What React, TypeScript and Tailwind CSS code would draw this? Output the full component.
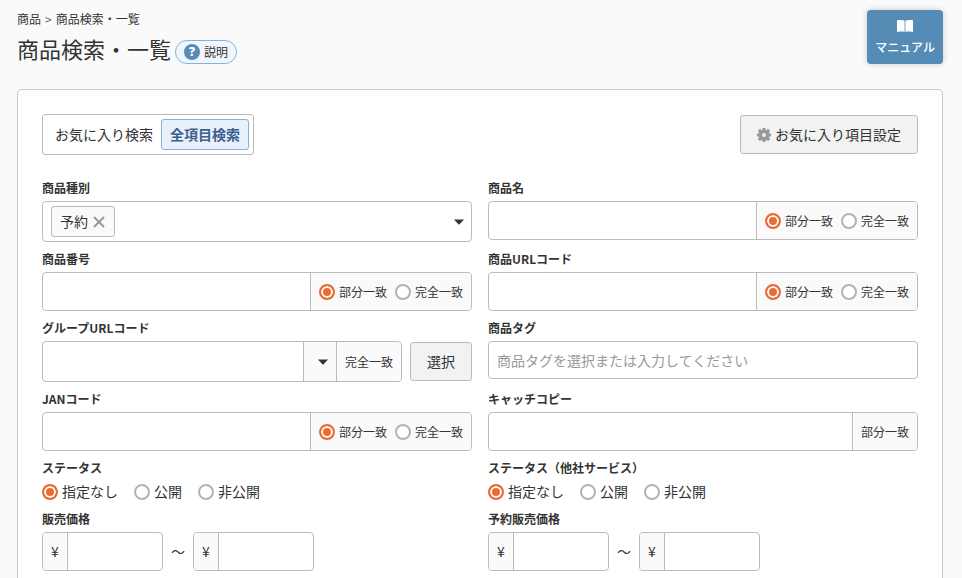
import { useState } from 'react'
import type { ReactNode } from 'react'

const radioClass =
  'size-4 shrink-0 appearance-none rounded-full border-2 border-[#b3b3b3] bg-white checked:border-[#e86c33] checked:bg-[#e86c33] checked:shadow-[inset_0_0_0_2px_#fff]'

const addonClass =
  'flex shrink-0 items-center border-[#bbb] bg-[#fafafa] px-2'

function Caret() {
  return (
    <svg width="10" height="6" viewBox="0 0 10 6" fill="#333" aria-hidden="true">
      <path d="M0 0.500h10L5.600 5.300a0.900 0.900 0 0 1-1.200 0z" />
    </svg>
  )
}

function GearIcon() {
  return (
    <svg width="14" height="14" viewBox="0 0 14 14" fill="none" aria-hidden="true">
      <circle cx="7" cy="7" r="3.7" stroke="#999" strokeWidth="3.6" />
      <path
        d="M7 0v3M7 11v3M0 7h3M11 7h3M1.900 1.900l2.100 2.100M10 10l2.100 2.100M1.900 12.100l2.100-2.100M10 4l2.100-2.100"
        stroke="#999"
        strokeWidth="3"
      />
    </svg>
  )
}

function BookIcon() {
  return (
    <svg width="18" height="14" viewBox="0 0 18 14" fill="#fff" aria-hidden="true">
      <path d="M1 2Q1 1.200 2 1.100C4.500.9 7 1 8.600 1.700V13C7 12.400 4.500 12.500 1 13z" />
      <path d="M17 2Q17 1.200 16 1.100C13.500.9 11 1 9.400 1.700V13C11 12.400 13.500 12.500 17 13z" />
    </svg>
  )
}

function Field({
  id,
  label,
  children,
}: {
  id: string
  label: string
  children: ReactNode
}) {
  return (
    <div className="flex min-w-0 flex-col gap-1">
      <label htmlFor={id} className="text-xs leading-[18px] font-bold">
        {label}
      </label>
      {children}
    </div>
  )
}

function MatchField({ id, label }: { id: string; label: string }) {
  return (
    <Field id={id} label={label}>
      <div className="flex h-[39px] overflow-hidden rounded border border-[#bbb] bg-white">
        <input id={id} type="text" className="min-w-0 flex-1 px-2 outline-none" />
        <div className={`${addonClass} gap-2 border-l text-xs`}>
          <label className="flex items-center gap-1">
            <input
              type="radio"
              name={`${id}-match`}
              className={radioClass}
              defaultChecked
            />
            部分一致
          </label>
          <label className="flex items-center gap-1">
            <input type="radio" name={`${id}-match`} className={radioClass} />
            完全一致
          </label>
        </div>
      </div>
    </Field>
  )
}

function StatusField({ name, label }: { name: string; label: string }) {
  return (
    <fieldset className="min-w-0">
      <legend className="mb-1 text-xs leading-[18px] font-bold">{label}</legend>
      <div className="flex h-[21px] items-center gap-4">
        {['指定なし', '公開', '非公開'].map((text, i) => (
          <label key={text} className="flex items-center gap-1">
            <input
              type="radio"
              name={name}
              className={radioClass}
              defaultChecked={i === 0}
            />
            {text}
          </label>
        ))}
      </div>
    </fieldset>
  )
}

function PriceInput({ id, label }: { id: string; label?: string }) {
  return (
    <div className="flex h-[39px] w-[121px] overflow-hidden rounded border border-[#bbb] bg-white">
      <span className={`${addonClass} w-[25px] justify-center border-r`}>¥</span>
      <input
        id={id}
        type="text"
        aria-label={label}
        className="min-w-0 flex-1 px-2 outline-none"
      />
    </div>
  )
}

function PriceField({ id, label }: { id: string; label: string }) {
  return (
    <Field id={id} label={label}>
      <div className="flex items-center gap-2">
        <PriceInput id={id} />
        <span>〜</span>
        <PriceInput id={`${id}-max`} label={`${label} 上限`} />
      </div>
    </Field>
  )
}

export default function App() {
  const [tagged, setTagged] = useState(true)

  return (
    <div className="min-h-screen bg-[#fafafa] pt-[10px] pr-[19px] pb-6 pl-[17px] font-['Noto_Sans_CJK_JP',sans-serif] text-[14px] leading-[21px] text-[#333]">
      <header className="flex items-start justify-between">
        <div>
          <nav className="flex gap-1 text-xs leading-[18px]">
            <a href="#">商品</a>
            <span className="text-[#666]">&gt;</span>
            <a href="#">商品検索・一覧</a>
          </nav>
          <div className="mt-0.5 flex items-center gap-1">
            <h1 className="text-[22px] leading-9">商品検索・一覧</h1>
            <button
              type="button"
              className="mt-2 flex h-6 items-center gap-1 rounded-full border border-[#7fb5dc] bg-[#f2f6fc] px-2 text-xs"
            >
              <span className="flex size-4 items-center justify-center rounded-full bg-[#548cb5] font-['Open_Sans',sans-serif] text-xs font-extrabold text-white">
                ?
              </span>
              説明
            </button>
          </div>
        </div>
        <a
          href="#"
          className="flex h-[54px] flex-col items-center rounded bg-[#548cb5] px-2 pt-[9px] text-xs font-medium text-white shadow-[0_0_6px_rgba(0,0,0,0.2)]"
        >
          <BookIcon />
          <span className="mt-1 leading-5">マニュアル</span>
        </a>
      </header>

      <main className="mt-[23px] rounded border border-[#ccc] bg-white p-6">
        <div className="mb-6 flex items-center justify-between">
          <div className="flex rounded-[3px] border border-[#bbb] bg-white p-1">
            <button type="button" className="h-[31px] px-2">
              お気に入り検索
            </button>
            <button
              type="button"
              className="h-[31px] rounded-[3px] border border-[#7fb5dc] bg-[#e9f0fa] px-2 font-bold text-[#3c5f90]"
            >
              全項目検索
            </button>
          </div>
          <button
            type="button"
            className="flex h-[39px] items-center gap-1 rounded-[3px] border border-[#bbb] bg-[#f2f2f2] px-4"
          >
            <GearIcon />
            お気に入り項目設定
          </button>
        </div>

        <form className="grid grid-cols-2 gap-x-4 gap-y-2">
          <Field id="kind" label="商品種別">
            <div className="flex h-[41px] items-center justify-between rounded border border-[#bbb] bg-white pr-[7px] pl-2">
              {tagged ? (
                <span className="flex h-[31px] items-center rounded-[3px] border border-[#bbb] bg-[#fafafa] pl-2">
                  予約
                  <button
                    type="button"
                    aria-label="予約を削除"
                    className="px-[5px] py-2"
                    onClick={() => setTagged(false)}
                  >
                    <svg
                      width="12"
                      height="12"
                      viewBox="0 0 12 12"
                      stroke="#999"
                      strokeWidth="2"
                      className="mr-1"
                    >
                      <path d="M1 1l10 10M11 1l-10 10" />
                    </svg>
                  </button>
                </span>
              ) : (
                <span />
              )}
              <button id="kind" type="button" aria-label="商品種別を選択">
                <Caret />
              </button>
            </div>
          </Field>
          <MatchField id="name" label="商品名" />

          <MatchField id="number" label="商品番号" />
          <MatchField id="url-code" label="商品URLコード" />

          <Field id="group-url" label="グループURLコード">
            <div className="flex items-center gap-2">
              <div className="flex h-[41px] min-w-0 flex-1 overflow-hidden rounded border border-[#bbb] bg-white">
                <input
                  id="group-url"
                  type="text"
                  className="min-w-0 flex-1 px-2 outline-none"
                />
                <button
                  type="button"
                  aria-label="候補を表示"
                  className="flex items-center border-l border-[#bbb] bg-[#fafafa] pr-2 pl-[14px]"
                >
                  <Caret />
                </button>
                <span className={`${addonClass} border-l text-xs`}>完全一致</span>
              </div>
              <button
                type="button"
                className="h-[39px] rounded-[3px] border border-[#bbb] bg-[#f2f2f2] px-4"
              >
                選択
              </button>
            </div>
          </Field>
          <Field id="tag" label="商品タグ">
            <input
              id="tag"
              type="text"
              placeholder="商品タグを選択または入力してください"
              className="h-[38px] rounded border border-[#bbb] bg-white px-2 outline-none placeholder:text-[#999]"
            />
          </Field>

          <MatchField id="jan" label="JANコード" />
          <Field id="catch" label="キャッチコピー">
            <div className="flex h-[39px] overflow-hidden rounded border border-[#bbb] bg-white">
              <input
                id="catch"
                type="text"
                className="min-w-0 flex-1 px-2 outline-none"
              />
              <span className={`${addonClass} border-l text-xs`}>部分一致</span>
            </div>
          </Field>

          <StatusField name="status" label="ステータス" />
          <StatusField name="other-status" label="ステータス（他社サービス）" />

          <PriceField id="price" label="販売価格" />
          <PriceField id="reserve-price" label="予約販売価格" />
        </form>
      </main>
    </div>
  )
}
